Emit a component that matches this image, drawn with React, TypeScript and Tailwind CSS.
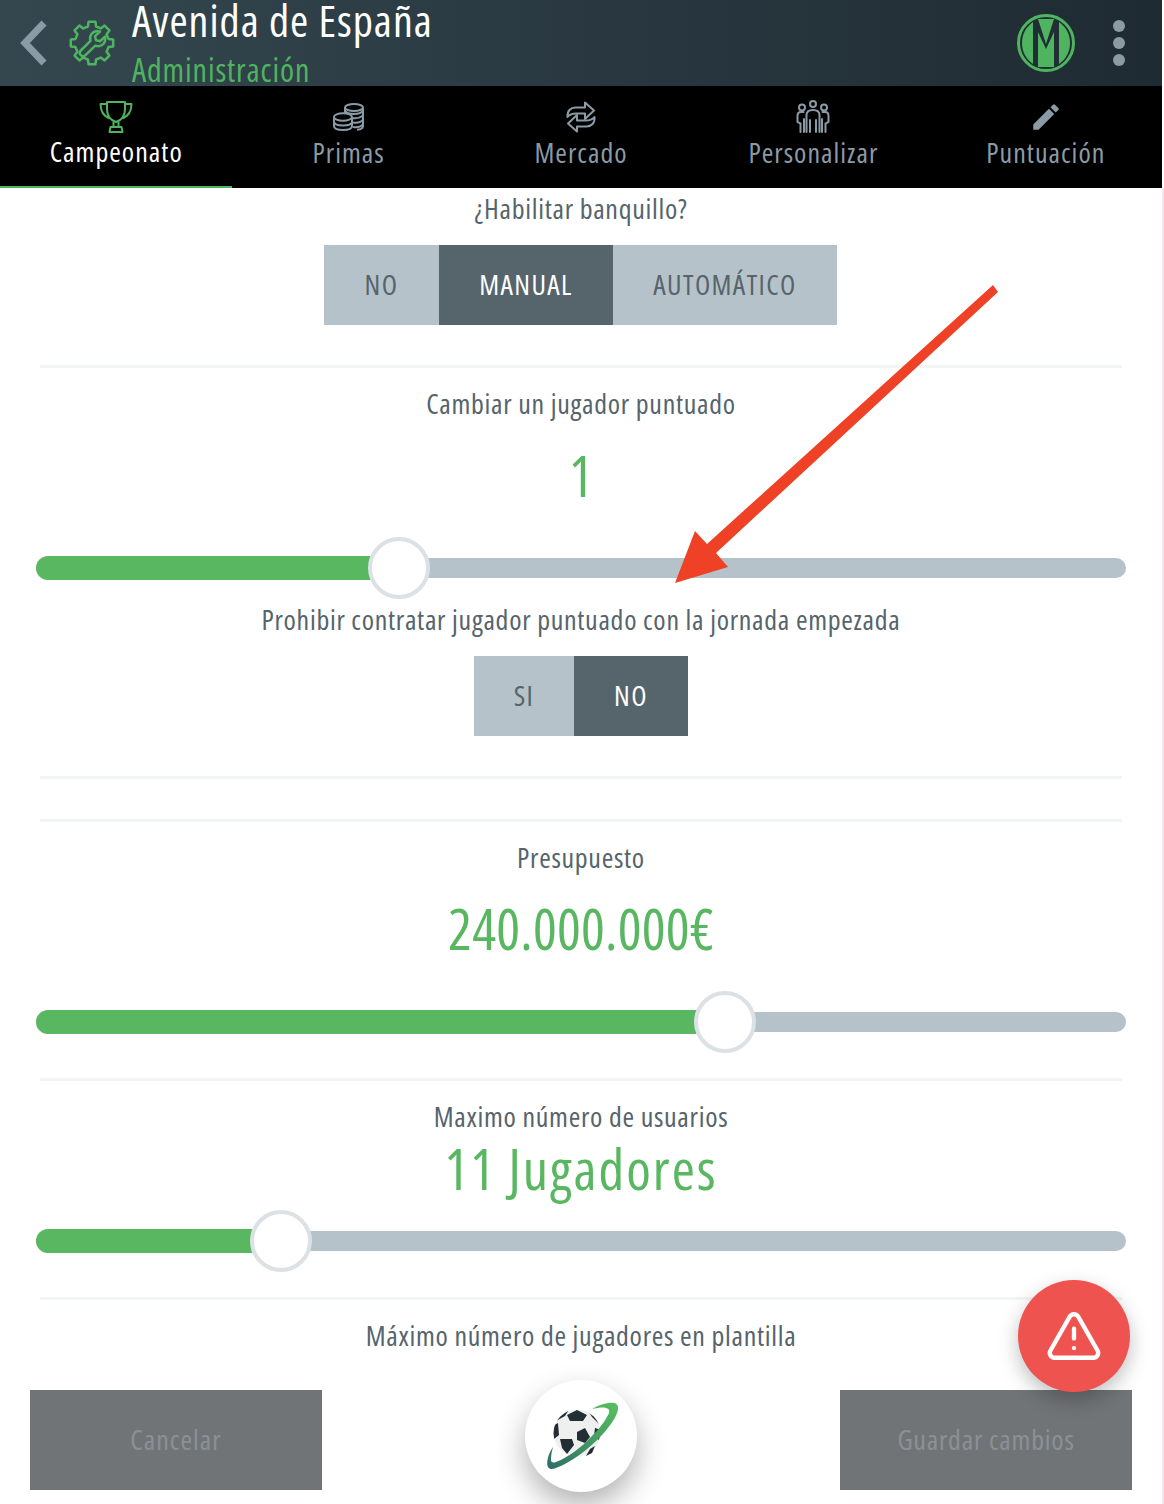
import React from "react";
import { TriangleAlert } from "lucide-react";
import { MdEdit } from "react-icons/md";

const font = "[font-family:'Open_Sans','Noto_Sans',sans-serif] [font-stretch:75%]";

const gearPath = (() => {
  const cx = 23, cy = 23, outer = 21.5, inner = 17, n = 8;
  const pts: string[] = [];
  for (let i = 0; i < n; i++) {
    const a = (i * 2 * Math.PI) / n - Math.PI / 2;
    const w = Math.PI / n;
    [[inner, -w * 0.62], [outer, -w * 0.4], [outer, w * 0.4], [inner, w * 0.62]].forEach(([r, d]) => {
      pts.push(`${(cx + r * Math.cos(a + d)).toFixed(1)},${(cy + r * Math.sin(a + d)).toFixed(1)}`);
    });
  }
  return `M${pts.join("L")}Z`;
})();

const Gear = () => (
  <svg width="46" height="46" viewBox="0 0 46 46" fill="none" stroke="#4fb45f" strokeWidth="2.5" strokeLinejoin="round" strokeLinecap="round">
    <path d={gearPath} />
    <path d="M31 11.500l-5 4.700 1 4 4 1 5-4.500c.8 3.500-.3 6.500-3 8.300-2 1.300-4.500 1.500-6.700.7l-9.800 9.500c-1.500 1.400-3.500 1.400-4.800 0-1.300-1.300-1.300-3.300.1-4.700l9.700-9.700c-.8-2.300-.5-4.700 1-6.700 2-2.600 5.500-3.600 8.500-2.600z" />
  </svg>
);

const Trophy = () => (
  <svg width="34" height="34" viewBox="0 0 34 34" fill="none" stroke="#4fb45f" strokeWidth="2" strokeLinejoin="round">
    <path d="M8 2h18v7c0 6-3 11-9 13-6-2-9-7-9-13z" />
    <path d="M8 4H1.500c0 7 3 12 9 14.500M26 4h6.500c0 7-3 12-9 14.500" />
    <path d="M14.500 21.500V27h5v-5.500M11.500 27h11l1 5h-13z" />
  </svg>
);

const Coins = () => (
  <svg width="32" height="30" viewBox="0 0 32 30" fill="none" stroke="#8a9ba6" strokeWidth="2">
    <ellipse cx="21" cy="5.500" rx="9" ry="3.600" />
    <path d="M12 5.500v6M30 5.500v18.500c0 2-2.500 3.500-6 3.800M12.500 9.500c1.500 1.500 5 2.500 8.500 2.500 4 0 8-1.500 9-3.500M19 16c4 .5 9-.5 11-3M20 20.500c4 .5 8.500-.5 10-3M20 25c4 .5 8.500-.5 10-3" />
    <ellipse cx="10" cy="15" rx="9" ry="3.800" />
    <path d="M1 15v9c0 2.500 4 4 9 4s9-1.500 9-4v-9M1 19.500c0 2.500 4 4 9 4s9-1.500 9-4" />
  </svg>
);

const Swap = () => (
  <svg width="32" height="32" viewBox="0 0 32 32" fill="none" stroke="#8a9ba6" strokeWidth="2" strokeLinejoin="round">
    <path d="M2.500 16c-.5-6 3-9.500 8-9.500H20V1.500l9 8-9 8.500v-5.500h-9c-3.500 0-6.500 1-8.500 3.500z" />
    <path d="M29.500 16c.5 6-3 9.500-8 9.500H12v5l-9-8 9-8.500v5.500h9c3.500 0 6.500-1 8.500-3.500z" />
  </svg>
);

const People = () => (
  <svg width="34" height="34" viewBox="0 0 34 34" fill="none" stroke="#8a9ba6" strokeWidth="2" strokeLinecap="round">
    <circle cx="17" cy="4" r="3" />
    <circle cx="6" cy="7.500" r="3" />
    <circle cx="28" cy="7.500" r="3" />
    <path d="M10.500 32V15c0-3 2-5 6.500-5s6.500 2 6.500 5v17M14 32V20M20 32V20" />
    <path d="M7.500 12H5c-2 0-3.500 1.500-3.500 4v6l3 1.500V32M8 32V19" />
    <path d="M26.500 12H29c2 0 3.500 1.500 3.500 4v6l-3 1.500V32M26 32V19" />
  </svg>
);

const MLogo = () => (
  <svg width="60" height="60" viewBox="0 0 60 60">
    <circle cx="30" cy="30" r="27.500" fill="none" stroke="#4fb45f" strokeWidth="3" />
    <path d="M6 30c0-9 4-16 11-21v42C10 46 6 39 6 30z" fill="#4fb45f" />
    <path d="M54 30c0-9-4-16-11-21v42c7-5 11-12 11-21z" fill="#4fb45f" />
    <path d="M22 6h16l-8 25z" fill="#4fb45f" />
    <path d="M30 36l8-17v35H22V19z" fill="#4fb45f" />
  </svg>
);

const Ball = () => (
  <svg width="76" height="76" viewBox="0 0 76 76">
    <defs>
      <linearGradient id="ring" x1="0" y1="1" x2="1" y2="0">
        <stop offset="0" stopColor="#2f6d68" />
        <stop offset="1" stopColor="#55c25f" />
      </linearGradient>
      <clipPath id="ballClip"><circle cx="34" cy="35" r="23.500" /></clipPath>
    </defs>
    <circle cx="34" cy="35" r="23.500" fill="#eef0f0" />
    <g clipPath="url(#ballClip)" fill="#222e33">
      <polygon points="24,17 34,12 44,17 40,23 27,23" />
      <polygon points="13,23 17,16 27,10 22,18" />
      <polygon points="44,11 56,20 59,29 49,19" />
      <polygon points="8,29 15,25 16,37 11,41" />
      <polygon points="34,34 42,30 47,39 42,45 34,42" />
      <polygon points="17,41 29,41 31,47 24,56 19,50" />
      <polygon points="52,30 58,32 56,42 51,38" />
    </g>
    <path d="M10 49C5 56 3 65 5 69c2 3 5 2 8 1 14-5 32-18 46-33C69 26 76 15 75 9c0-4-5-5-10-4-6 1-11 3-16 6 5-1 11-2 14-1 4 1 4 4 2 7-3 6-8 13-16 21C39 49 24 60 13 64c-3 1-5 1-5-3 0-4 1-8 2-12z" fill="url(#ring)" />
    <path d="M47 51l5-3-3 7-6 3z" fill="#222e33" />
  </svg>
);

const tabs = [
  { label: "Campeonato", icon: <Trophy />, active: true },
  { label: "Primas", icon: <Coins /> },
  { label: "Mercado", icon: <Swap /> },
  { label: "Personalizar", icon: <People /> },
  { label: "Puntuación", icon: <MdEdit size={34} color="#8a9ba6" /> },
];

const Label = ({ children, cls = "" }: { children: React.ReactNode; cls?: string }) => (
  <p className={`h-10 text-center text-[28px] leading-[38px] tracking-[0.7px] text-[#56646c] ${cls}`}>{children}</p>
);

const Value = ({ children, cls = "", track = "" }: { children: React.ReactNode; cls?: string; track?: string }) => (
  <p className={`h-[60px] text-center text-[56px] leading-[57px] text-[#59b661] ${track} ${cls}`}>{children}</p>
);

const Divider = ({ cls = "" }: { cls?: string }) => <div className={`mx-10 h-[3px] bg-[#f3f4f4] ${cls}`} />;

const Seg = ({ items, active, widths, cls = "" }: { items: string[]; active: number; widths: string[]; cls?: string }) => (
  <div className={`flex h-20 justify-center ${cls}`}>
    {items.map((t, i) => (
      <div
        key={t}
        className={`flex items-center justify-center pb-[2px] text-[28px] tracking-[1.4px] ${widths[i]} ${i === active ? "bg-[#56646c] text-white" : "bg-[#b6c2c9] text-[#56646c]"}`}
      >
        {t}
      </div>
    ))}
  </div>
);

const Slider = ({ pct, cls = "" }: { pct: number; cls?: string }) => (
  <div className={`relative mx-9 flex h-16 items-center ${cls}`}>
    <div className="h-5 w-full rounded-full bg-[#b6c2c9]" />
    <div className="absolute left-0 h-6 rounded-l-full bg-[#59b661]" style={{ width: `${pct}px` }} />
    <div
      className="absolute size-[62px] -translate-x-1/2 rounded-full border-4 border-[#dbe1e5] bg-white"
      style={{ left: `${pct + 27}px` }}
    />
  </div>
);

export default function App() {
  return (
    <div className={`relative h-[1504px] w-[1164px] overflow-hidden bg-white ${font}`}>
      <div className="w-[1162px]">
        <header className="flex h-[86px] items-center bg-gradient-to-r from-[#34474f] to-[#1f2b33]">
          <svg width="30" height="46" viewBox="0 0 30 46" fill="none" stroke="#8a9ba6" strokeWidth="7" className="ml-[19px]">
            <path d="M25 3L6 23l19 20" />
          </svg>
          <div className="ml-[20px]"><Gear /></div>
          <div className="ml-[17px] h-full flex-1">
            <div className="h-[40px] text-[44px] leading-[40px] tracking-[1px] text-white">Avenida de España</div>
            <div className="mt-[12px] h-[34px] text-[32px] leading-[36px] tracking-[0.9px] text-[#4fb45f]">Administración</div>
          </div>
          <MLogo />
          <div className="ml-[37px] mr-[37px] flex flex-col gap-[5px]">
            <span className="size-3 rounded-full bg-[#8a9ba6]" />
            <span className="size-3 rounded-full bg-[#8a9ba6]" />
            <span className="size-3 rounded-full bg-[#8a9ba6]" />
          </div>
        </header>
        <nav className="flex h-[102px] bg-black">
          {tabs.map((t) => (
            <div
              key={t.label}
              className={`flex flex-1 flex-col items-center pt-[14px] ${t.active ? "border-b-[2px] border-[#4fb45f] font-medium text-white" : "text-[#8a9ba6]"}`}
            >
              <div className="flex h-[34px] items-center">{t.icon}</div>
              <span className={`text-[28px] leading-9 tracking-[1px] ${t.active ? "-mt-px" : ""}`}>{t.label}</span>
            </div>
          ))}
        </nav>
        <main>
          <Label cls="mt-px">¿Habilitar banquillo?</Label>
          <div className="mt-4">
            <Seg items={["NO", "MANUAL", "AUTOMÁTICO"]} active={1} widths={["w-[115px]", "w-[174px]", "w-[224px]"]} cls="pr-px" />
          </div>
          <Divider cls="mt-10" />
          <Label cls="mt-4">Cambiar un jugador puntuado</Label>
          <Value cls="mt-[23px]">1</Value>
          <Slider pct={336} cls="mt-[29px]" />
          <Label>Prohibir contratar jugador puntuado con la jornada empezada</Label>
          <div className="mt-4">
            <Seg items={["SI", "NO"]} active={1} widths={["w-[100px]", "w-[114px]"]} />
          </div>
          <Divider cls="mt-10" />
          <Divider cls="mt-10" />
          <Label cls="mt-4">Presupuesto</Label>
          <Value cls="mt-[22px]" track="tracking-[0.25px]">240.000.000€</Value>
          <Slider pct={662} cls="mt-[30px]" />
          <Divider cls="mt-[24px]" />
          <Label cls="mt-4">Maximo número de usuarios</Label>
          <Value cls="mt-[3px]" track="tracking-[2px]">11 Jugadores</Value>
          <Slider pct={218} cls="mt-[9px]" />
          <Divider cls="mt-[24px]" />
          <Label cls="mt-4">Máximo número de jugadores en plantilla</Label>
        </main>
      </div>
      <div className="absolute right-0 top-[188px] h-[1316px] w-[2px] bg-[#fbe4ee]" />

      <svg className="pointer-events-none absolute left-0 top-0" width="1164" height="1504">
        <polygon points="993,285 998,292 716,553 728,567 675,583 695,531 707,544" fill="#ee4125" />
      </svg>

      <button className="absolute left-[30px] top-[1390px] h-[100px] w-[292px] pb-[2px] bg-[#717477] text-[28px] tracking-[1px] text-[#8b9095]">Cancelar</button>
      <button className="absolute left-[840px] top-[1390px] h-[100px] w-[292px] pb-[2px] bg-[#717477] text-[28px] tracking-[0.75px] text-[#8b9095]">Guardar cambios</button>
      <div className="absolute left-[525px] top-[1380px] flex size-28 items-center justify-center rounded-full bg-white shadow-[0_14px_30px_rgba(0,0,0,0.3)]">
        <Ball />
      </div>
      <div className="absolute left-[1018px] top-[1280px] flex size-28 items-center justify-center rounded-full bg-[#ef5350] shadow-[0_8px_20px_rgba(0,0,0,0.25)]">
        <TriangleAlert size={58} color="white" strokeWidth={1.8} />
      </div>
    </div>
  );
}
